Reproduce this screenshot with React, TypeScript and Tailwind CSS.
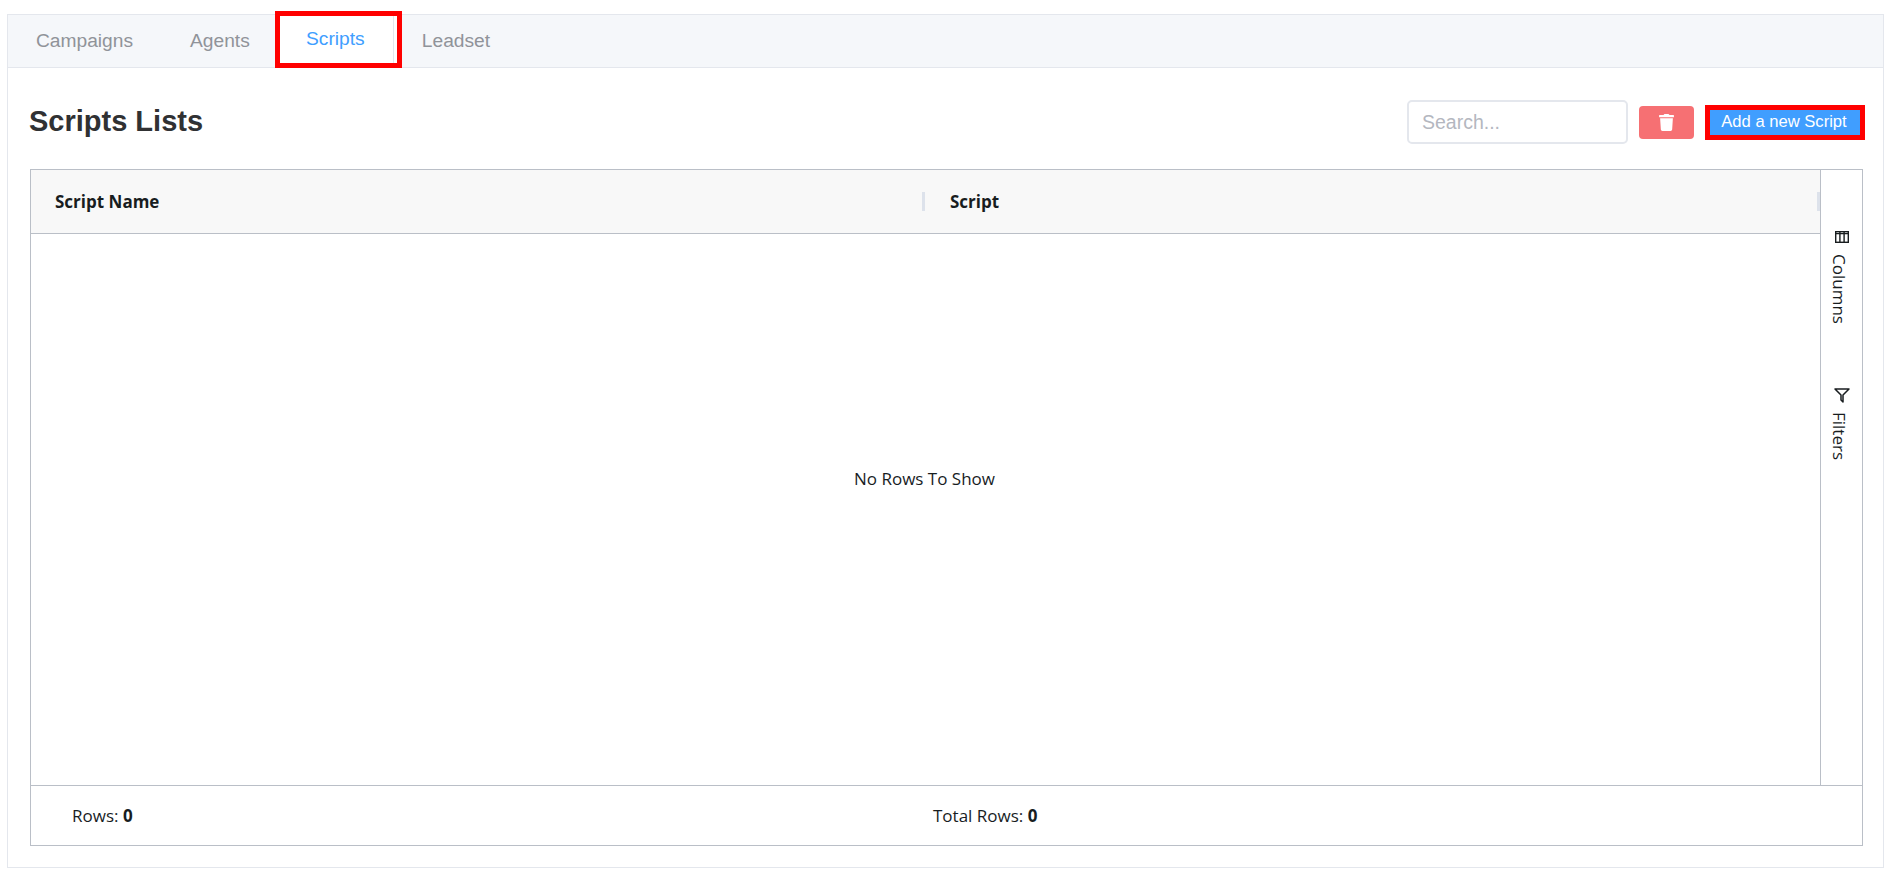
import type { FC } from "react";
import { FaTrash } from "react-icons/fa";

const ColumnsIcon: FC = () => (
  <svg width="14" height="12" viewBox="0 0 14 12" fill="none" stroke="#181d1f" strokeWidth="1.4">
    <rect x="0.7" y="0.7" width="12.6" height="10.6" />
    <path d="M0.7 2.6H13.3M4.9 1V11M9.1 1V11" />
  </svg>
);

const FilterIcon: FC = () => (
  <svg width="16" height="15" viewBox="0 0 16 15" fill="none" stroke="#181d1f" strokeWidth="1.5">
    <path d="M1 1H15L9 7V14L7 12V7Z" strokeLinejoin="round" />
  </svg>
);

const App: FC = () => {
  return (
    <div className="w-[1892px] h-[875px] bg-white pt-[14px] pl-[7px] overflow-hidden font-['Liberation_Sans',sans-serif]">
      <div className="w-[1877px] h-[854px] border border-[#e4e7ed] flex flex-col">
        {/* tabs */}
        <div className="h-[53px] bg-[#f5f7fa] border-b border-[#e4e7ed] flex items-stretch text-[19.2px] text-[#909399] shrink-0">
          <div className="px-[28px] flex items-center">Campaigns</div>
          <div className="pl-[29px] pr-[28px] flex items-center">Agents</div>
          <div className="-mt-[4px] -mb-px w-[127px] border-[5px] border-[#ff0000] bg-white text-[#409eff] -ml-[3px]">
            <div className="h-full mr-[3px] pr-[2px] border-r border-[#e4e7ed] flex items-center justify-center">Scripts</div>
          </div>
          <div className="pl-[20px] flex items-center">Leadset</div>
        </div>

        <div className="flex-1 flex flex-col pl-[22px] pr-[20px] min-h-0">
          {/* title row */}
          <div className="h-[101px] flex items-center justify-between shrink-0 pt-[7px] -mr-[2px]">
            <h1 className="text-[29px] font-bold text-[#303133] -ml-px">Scripts Lists</h1>
            <div className="flex items-center">
              <input
                placeholder="Search..."
                className="w-[221px] h-[44px] border-2 border-[#e4e7ed] rounded-[5px] px-[13px] text-[19.5px] placeholder:text-[#b4b7bf] outline-none"
              />
              <button className="ml-[11px] w-[55px] h-[33px] rounded-[4px] bg-[#f67073] flex items-center justify-center text-white">
                <FaTrash size={17} />
              </button>
              <button className="ml-[11px] w-[160px] h-[35px] border-[5px] border-[#ff0000] bg-[#409eff] text-white text-[16.6px] flex items-center justify-center pr-[2px]">
                Add a new Script
              </button>
            </div>
          </div>

          {/* grid */}
          <div className="h-[677px] border border-[#babfc7] flex flex-col font-['Open_Sans',sans-serif] text-[#181d1f] text-[17px]">
            <div className="flex-1 flex min-h-0">
              <div className="flex-1 flex flex-col min-w-0">
                <div className="h-[64px] bg-[#f8f8f8] border-b border-[#babfc7] flex items-center font-bold shrink-0">
                  <div className="w-[894px] h-full pl-[24px] flex items-center justify-between">
                    <span className="pt-[1px]">Script Name</span>
                    <span className="w-[3px] h-[19px] bg-[#dde2eb]" />
                  </div>
                  <div className="flex-1 h-full pl-[25px] flex items-center justify-between">
                    <span className="pt-[1px]">Script</span>
                    <span className="w-[3px] h-[19px] bg-[#dde2eb]" />
                  </div>
                </div>
                <div className="flex-1 flex items-center justify-center pb-[61px] pr-[2px]">No Rows To Show</div>
              </div>
              <div className="w-[42px] border-l border-[#babfc7] flex flex-col items-center pt-[61px] shrink-0">
                <div className="flex flex-col items-center gap-[11px]">
                  <ColumnsIcon />
                  <span className="[writing-mode:vertical-lr] leading-[20px] mr-[5px]">Columns</span>
                </div>
                <div className="flex flex-col items-center gap-[9px] mt-[64px]">
                  <FilterIcon />
                  <span className="[writing-mode:vertical-lr] leading-[20px] mr-[5px]">Filters</span>
                </div>
              </div>
            </div>
            <div className="h-[60px] border-t border-[#babfc7] flex items-center shrink-0 pt-[1px]">
              <div className="w-[902px] pl-[41px]">
                Rows: <span className="font-bold">0</span>
              </div>
              <div>
                Total Rows: <span className="font-bold">0</span>
              </div>
            </div>
          </div>
        </div>
      </div>
    </div>
  );
};

export default App;
